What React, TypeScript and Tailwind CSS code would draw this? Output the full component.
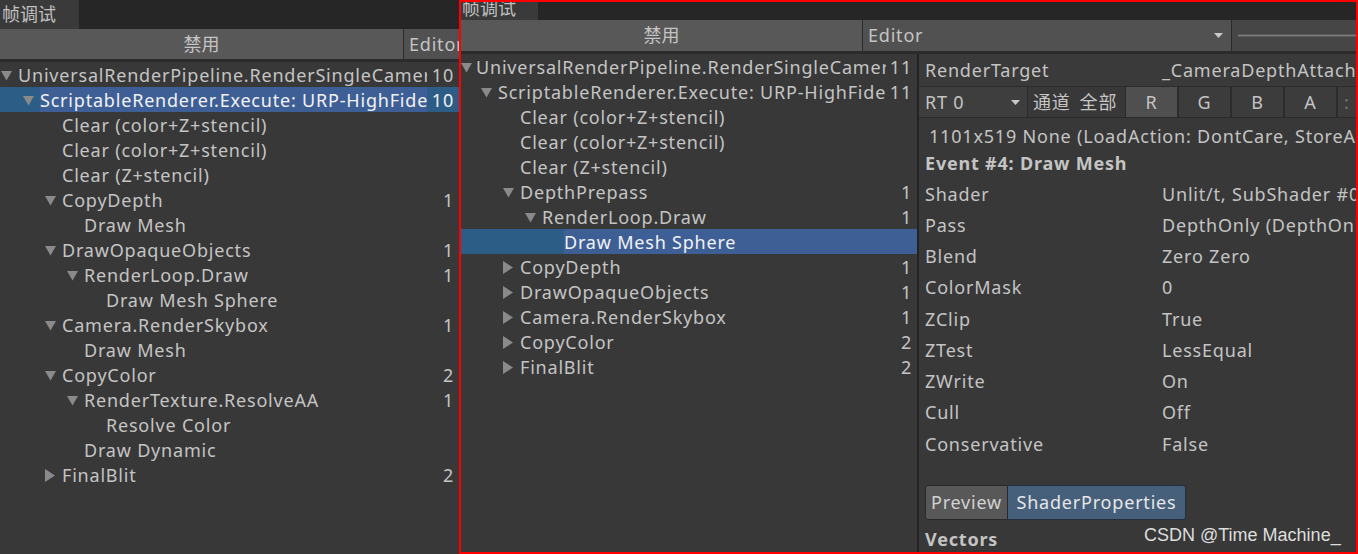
import React from "react";

type Row = { t: string; l: number; a?: "d" | "r"; n?: string; sel?: boolean };

const leftRows: Row[] = [
  { t: "UniversalRenderPipeline.RenderSingleCamera", l: 0, a: "d", n: "10" },
  { t: "ScriptableRenderer.Execute: URP-HighFidelity", l: 1, a: "d", n: "10", sel: true },
  { t: "Clear (color+Z+stencil)", l: 2 },
  { t: "Clear (color+Z+stencil)", l: 2 },
  { t: "Clear (Z+stencil)", l: 2 },
  { t: "CopyDepth", l: 2, a: "d", n: "1" },
  { t: "Draw Mesh", l: 3 },
  { t: "DrawOpaqueObjects", l: 2, a: "d", n: "1" },
  { t: "RenderLoop.Draw", l: 3, a: "d", n: "1" },
  { t: "Draw Mesh Sphere", l: 4 },
  { t: "Camera.RenderSkybox", l: 2, a: "d", n: "1" },
  { t: "Draw Mesh", l: 3 },
  { t: "CopyColor", l: 2, a: "d", n: "2" },
  { t: "RenderTexture.ResolveAA", l: 3, a: "d", n: "1" },
  { t: "Resolve Color", l: 4 },
  { t: "Draw Dynamic", l: 3 },
  { t: "FinalBlit", l: 2, a: "r", n: "2" },
];

const rightRows: Row[] = [
  { t: "UniversalRenderPipeline.RenderSingleCamera", l: 0, a: "d", n: "11" },
  { t: "ScriptableRenderer.Execute: URP-HighFidelity", l: 1, a: "d", n: "11" },
  { t: "Clear (color+Z+stencil)", l: 2 },
  { t: "Clear (color+Z+stencil)", l: 2 },
  { t: "Clear (Z+stencil)", l: 2 },
  { t: "DepthPrepass", l: 2, a: "d", n: "1" },
  { t: "RenderLoop.Draw", l: 3, a: "d", n: "1" },
  { t: "Draw Mesh Sphere", l: 4, sel: true },
  { t: "CopyDepth", l: 2, a: "r", n: "1" },
  { t: "DrawOpaqueObjects", l: 2, a: "r", n: "1" },
  { t: "Camera.RenderSkybox", l: 2, a: "r", n: "1" },
  { t: "CopyColor", l: 2, a: "r", n: "2" },
  { t: "FinalBlit", l: 2, a: "r", n: "2" },
];

function Tri({ a }: { a?: "d" | "r" }) {
  if (a === "d")
    return (
      <svg width="11" height="10" viewBox="0 0 11 10" className="block mt-[3px]">
        <polygon points="0,0 11,0 5.5,9.5" fill="#8a8a8a" />
      </svg>
    );
  if (a === "r")
    return (
      <svg width="10" height="13" viewBox="0 0 10 13" className="block mt-[1px]">
        <polygon points="0,0 10,6.5 0,13" fill="#8a8a8a" />
      </svg>
    );
  return null;
}

function TreeRow({ r, x0, numW }: { r: Row; x0: number; numW: number }) {
  const textX = x0 + 22 * r.l;
  const triX = Math.max(0, textX - 17);
  return (
    <div
      className={`flex h-[25px] leading-[26px] ${
        r.sel ? "bg-[#2c5d87] text-[#f2f2f2]" : "text-[#c4c4c4]"
      }`}
    >
      <div className="shrink-0 flex items-center" style={{ width: textX, paddingLeft: triX }}>
        <Tri a={r.a} />
      </div>
      <div
        className={`flex-1 min-w-0 overflow-hidden whitespace-nowrap ${
          r.sel ? "bg-[#3e5f96]" : ""
        }`}
      >
        {r.t}
      </div>
      {(r.n || !r.sel) && (
        <div className="shrink-0 text-right pr-[5px] whitespace-nowrap" style={{ width: numW }}>
          {r.n}
        </div>
      )}
    </div>
  );
}

function DropArrow() {
  return (
    <svg width="9" height="5" viewBox="0 0 9 5" className="block">
      <polygon points="0,0 9,0 4.5,5" fill="#c8c8c8" />
    </svg>
  );
}

function LeftPanel() {
  return (
    <div className="w-[459px] h-full flex flex-col bg-[#383838] shrink-0">
      <div className="h-[29px] bg-[#262626] flex shrink-0">
        <div className="w-[79px] bg-[#3a3a3a] pl-[2px] leading-[29px] text-[#c0c0c0] tracking-normal">
          帧调试
        </div>
      </div>
      <div className="h-[30px] flex gap-[1px] bg-[#2b2b2b] shrink-0">
        <div className="w-[403px] bg-[#585858] text-center leading-[30px] text-[#c4c4c4] tracking-normal">
          禁用
        </div>
        <div className="flex-1 bg-[#515151] pl-[5px] leading-[30px] overflow-hidden whitespace-nowrap text-[#c4c4c4]">
          Editor
        </div>
      </div>
      <div className="h-[3px] bg-[#2b2b2b] shrink-0" />
      <div className="flex-1">
        {leftRows.map((r, i) => (
          <TreeRow key={i} r={r} x0={18} numW={32} />
        ))}
      </div>
    </div>
  );
}

const props: [string, string][] = [
  ["Shader", "Unlit/t, SubShader #0"],
  ["Pass", "DepthOnly (DepthOnly)"],
  ["Blend", "Zero Zero"],
  ["ColorMask", "0"],
  ["ZClip", "True"],
  ["ZTest", "LessEqual"],
  ["ZWrite", "On"],
  ["Cull", "Off"],
  ["Conservative", "False"],
];

function Details() {
  return (
    <div className="flex-1 min-w-0 overflow-hidden flex flex-col text-[#c4c4c4] bg-[#383838]">
      <div className="h-[33px] shrink-0 flex items-center border-b border-[#2b2b2b] bg-[#3a3a3a] whitespace-nowrap">
        <div className="w-[243px] pl-[6px] shrink-0">RenderTarget</div>
        <div>_CameraDepthAttachment</div>
      </div>
      <div className="h-[31px] shrink-0 flex border-b border-[#2b2b2b] bg-[#2b2b2b] whitespace-nowrap leading-[30px]">
        <div className="w-[108px] shrink-0 bg-[#3e3e3e] pl-[6px] pr-[7px] flex items-center justify-between">
          <span>RT 0</span>
          <DropArrow />
        </div>
        <div className="w-[97px] shrink-0 ml-[1px] bg-[#383838] pl-[5px] flex gap-[9px]">
          <span>通道</span>
          <span>全部</span>
        </div>
        <div className="w-[51px] shrink-0 ml-[1px] bg-[#4f4f4f] text-center">R</div>
        <div className="w-[51px] shrink-0 ml-[2px] bg-[#3c3c3c] text-center">G</div>
        <div className="w-[51px] shrink-0 ml-[2px] bg-[#3c3c3c] text-center">B</div>
        <div className="w-[51px] shrink-0 ml-[2px] bg-[#3c3c3c] text-center">A</div>
        <div className="w-[40px] shrink-0 ml-[2px] bg-[#3c3c3c] pl-[6px] text-[#777]">:</div>
      </div>
      <div className="h-[26px] mt-[5px] shrink-0 pl-[10px] leading-[26px] whitespace-nowrap">
        1101x519 None (LoadAction: DontCare, StoreAction: Store)
      </div>
      <div className="h-[27px] shrink-0 pl-[6px] leading-[28px] font-bold whitespace-nowrap">
        Event #4: Draw Mesh
      </div>
      <div className="mt-[1.5px] shrink-0">
        {props.map(([k, v]) => (
          <div key={k} className="h-[31.25px] leading-[32px] flex whitespace-nowrap">
            <div className="w-[243px] shrink-0 pl-[6px]">{k}</div>
            <div>{v}</div>
          </div>
        ))}
      </div>
      <div className="mt-[26px] ml-[6px] h-[35px] shrink-0 flex">
        <div className="w-[83px] bg-[#585858] border border-[#2a2a2a] rounded-l-[3px] text-[#d2d2d2] text-center leading-[33px]">
          Preview
        </div>
        <div className="w-[178px] bg-[#46607c] border border-[#22303f] border-l-0 rounded-r-[3px] text-[#e6e6e6] text-center leading-[33px]">
          ShaderProperties
        </div>
      </div>
      <div className="mt-[7px] h-[24px] shrink-0 pl-[6px] leading-[25px] font-bold whitespace-nowrap">
        Vectors
      </div>
    </div>
  );
}

function RightPanel() {
  return (
    <div className="w-[899px] h-full border-2 border-[#ff0000] flex flex-col shrink-0 bg-[#383838]">
      <div className="h-[18px] bg-[#262626] flex shrink-0 overflow-hidden">
        <div className="w-[77px] bg-[#3a3a3a] overflow-hidden">
          <div className="-mt-[8px] pl-[1px] leading-[29px] text-[#c0c0c0] tracking-normal whitespace-nowrap">
            帧调试
          </div>
        </div>
      </div>
      <div className="h-[31px] flex gap-[1px] bg-[#2b2b2b] shrink-0">
        <div className="w-[401px] shrink-0 bg-[#585858] text-center leading-[31px] text-[#c4c4c4] tracking-normal">
          禁用
        </div>
        <div className="w-[368px] shrink-0 bg-[#515151] pl-[5px] pr-[8px] flex items-center justify-between text-[#c4c4c4]">
          <span>Editor</span>
          <DropArrow />
        </div>
        <div className="flex-1 bg-[#464646] flex items-center pl-[6px]">
          <div className="h-[3px] w-full bg-[#7e7e7e] border-y border-[#5a5a5a]" />
        </div>
      </div>
      <div className="h-[3px] bg-[#2b2b2b] shrink-0" />
      <div className="flex-1 flex min-h-0">
        <div className="w-[456px] shrink-0">
          {rightRows.map((r, i) => (
            <TreeRow key={i} r={r} x0={15} numW={31} />
          ))}
        </div>
        <div className="w-[2px] shrink-0 bg-[#232323]" />
        <Details />
      </div>
    </div>
  );
}

export default function App() {
  return (
    <div className="relative w-[1358px] h-[554px] overflow-hidden flex bg-[#383838] font-['Noto_Sans','Noto_Sans_CJK_SC',sans-serif] text-[18px] tracking-[0.8px] text-[#c4c4c4]">
      <LeftPanel />
      <RightPanel />
      <div className="absolute left-[1144px] top-[523px] leading-[24px] text-[18px] tracking-normal text-[#dedede] font-['Liberation_Sans',Arial,sans-serif] whitespace-nowrap">
        CSDN @Time Machine_
      </div>
    </div>
  );
}
